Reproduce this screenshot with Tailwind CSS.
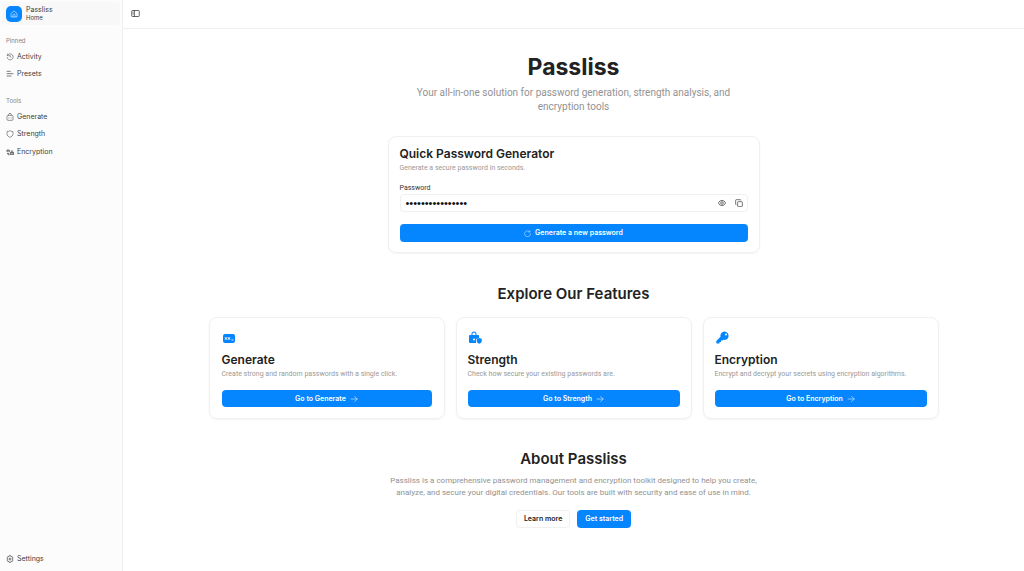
<!DOCTYPE html>
<html lang="en">
<head>
<meta charset="utf-8">
<meta name="viewport" content="width=device-width, initial-scale=1">
<title>Passliss</title>
<script src="https://cdn.jsdelivr.net/npm/@tailwindcss/browser@4"></script>
</head>
<body class="flex min-h-screen bg-white font-[Inter,sans-serif] text-[7px] leading-[10px] text-[#222]">

<aside class="flex w-[123px] shrink-0 flex-col border-r border-[#f0f0f0] bg-[#fcfcfc] text-[#3c3c3c]">
  <a href="#" class="m-[2px] flex h-[23px] items-center gap-1 rounded bg-[#f8f8f8] px-1">
    <span class="flex size-4 items-center justify-center rounded-[5px] bg-[#0586ff] text-white">
      <svg class="size-2" viewBox="0 0 24 24" fill="none" stroke="currentColor" stroke-width="1.6" stroke-linejoin="round"><path d="M3 10.5 12 3l9 7.500V21H3z"/><path d="M9 21v-6a3 3 0 0 1 6 0v6"/></svg>
    </span>
    <span class="flex flex-col leading-[8px]"><span>Passliss</span><span class="text-[6px]">Home</span></span>
  </a>
  <nav class="flex grow flex-col px-[6px] pb-1">
    <h2 class="mt-[9px] text-[6px] text-[#858585]">Pinned</h2>
    <a href="#" class="mt-[2px] flex h-[17px] items-center gap-[3px]">
      <svg class="size-2" viewBox="0 0 24 24" fill="none" stroke="currentColor" stroke-width="1.600"><path d="M4 2v6h6M4.500 7.500a9 9 0 1 1-1 5M12 6v5l4 2"/></svg>Activity</a>
    <a href="#" class="flex h-[18px] items-center gap-[3px]">
      <svg class="size-2" viewBox="0 0 24 24" fill="none" stroke="currentColor" stroke-width="2"><path d="M2 4h12M2 11h20M2 18h14"/></svg>Presets</a>
    <h2 class="mt-[13px] text-[6px] text-[#858585]">Tools</h2>
    <a href="#" class="mt-[2px] flex h-[17px] items-center gap-[3px]">
      <svg class="size-2" viewBox="0 0 24 24" fill="none" stroke="currentColor" stroke-width="1.600"><rect x="3" y="7" width="18" height="15" rx="3"/><path d="M8 7V5a4 4 0 0 1 8 0v2M7 15h2M11 15h2M15 15h2"/></svg>Generate</a>
    <a href="#" class="flex h-[18px] items-center gap-[3px]">
      <svg class="size-2" viewBox="0 0 24 24" fill="none" stroke="currentColor" stroke-width="1.600" stroke-linejoin="round"><path d="M12 2c3 2 6 3 9 3v6c0 6-4 9-9 11-5-2-9-5-9-11V5c3 0 6-1 9-3z"/></svg>Strength</a>
    <a href="#" class="flex h-[17px] items-center gap-[3px]">
      <svg class="size-2" viewBox="0 0 24 24" fill="none" stroke="currentColor" stroke-width="2"><path d="M3 12V6h7v6M3 9h7M3 16h7M6 16v4h5"/><rect x="14" y="13" width="8" height="7"/><path d="M16 13v-3a2 2 0 0 1 4 0v3M16 16h4"/></svg>Encryption</a>
    <a href="#" class="mt-auto flex h-[17px] items-center gap-[3px]">
      <svg class="size-2" viewBox="0 0 24 24" fill="none" stroke="currentColor" stroke-width="2" stroke-linejoin="round"><path d="m9.500 2h5l1 3 3-.5 2.500 4.500-2 3 2 3-2.500 4.500-3-.5-1 3h-5l-1-3-3 .5L3 15l2-3-2-3 2.500-4.500 3 .5z"/><circle cx="12" cy="12" r="3"/></svg>Settings</a>
  </nav>
</aside>

<div class="flex min-w-0 grow flex-col">
  <header class="flex h-[29px] items-center border-b border-[#f0f0f0] px-2 pb-[2px]">
    <button type="button" aria-label="Toggle sidebar" class="text-[#333]">
      <svg class="size-[9px]" viewBox="0 0 24 24" fill="none" stroke="currentColor" stroke-width="2"><rect x="2" y="4" width="20" height="16" rx="2"/><path d="M9 4v16M4.500 8h2M4.500 11h2M4.500 14h2"/></svg>
    </button>
  </header>

  <main class="flex flex-col items-center px-[25px] pt-6">
    <h1 class="text-[23px] leading-[28px] font-bold">Passliss</h1>
    <p class="mt-[5px] max-w-[340px] text-center font-[Roboto,sans-serif] text-[10px] leading-[14px] text-[#929292]">Your all-in-one solution for password generation, strength analysis, and encryption tools</p>

    <section class="mt-[22px] w-full max-w-[372px] rounded-lg border border-[#f0f0f0] px-[11px] py-[10px] shadow-xs">
      <h2 class="text-[12px] leading-[14px] font-semibold">Quick Password Generator</h2>
      <p class="mt-[2px] font-[Roboto,sans-serif] text-[#999]">Generate a secure password in seconds.</p>
      <label for="password" class="mt-[10px] block font-[Roboto,sans-serif] text-[#333]">Password</label>
      <div class="mt-[1px] flex h-[18px] items-center gap-[9px] rounded border border-[#f0f0f0] pr-1 pl-[5px] text-[#333]">
        <input id="password" type="password" value="aB3dE5gH7jK9mN2p" class="min-w-0 grow font-['Liberation_Sans',sans-serif] text-[11px] leading-[14px] text-[#111] outline-none">
        <button type="button" aria-label="Show password"><svg class="size-2" viewBox="0 0 24 24" fill="none" stroke="currentColor" stroke-width="2"><path d="M1 12q4-8 11-8t11 8q-4 8-11 8T1 12z"/><circle cx="12" cy="12" r="4"/></svg></button>
        <button type="button" aria-label="Copy password"><svg class="size-2" viewBox="0 0 24 24" fill="none" stroke="currentColor" stroke-width="2"><rect x="8" y="8" width="14" height="15" rx="2"/><path d="M4 17H3a1 1 0 0 1-1-1V4a2 2 0 0 1 2-2h12a1 1 0 0 1 1 1v1"/></svg></button>
      </div>
      <button type="button" class="mt-[12px] flex h-[18px] w-full items-center justify-center gap-1 rounded bg-[#0586ff] font-semibold text-white">
        <svg class="size-[7px]" viewBox="0 0 24 24" fill="none" stroke="currentColor" stroke-width="1.600"><path d="M20 7a10 10 0 1 0 2 5M20 2v5h-5"/></svg>Generate a new password</button>
    </section>

    <h2 class="mt-[31px] text-[15px] leading-[20px] font-semibold">Explore Our Features</h2>
    <div class="mt-[13px] grid w-full max-w-[730px] grid-cols-3 gap-[11px]">
      <section class="rounded-lg border border-[#f0f0f0] px-3 pt-[10px] pb-[11px] shadow-xs">
        <svg class="mt-[2px] size-4 text-[#0586ff]" viewBox="0 0 16 16"><rect x="1" y="4" width="12" height="9" rx="2" fill="currentColor"/><path d="m3 7.500 2 2m0-2-2 2m1-2.500v3m2-2.500 2 2m0-2-2 2m1-2.500v3m2.500 0h2" stroke="#fff" stroke-width=".8" fill="none"/></svg>
        <h3 class="mt-[7px] text-[12px] leading-[14px] font-semibold">Generate</h3>
        <p class="mt-[2px] font-[Roboto,sans-serif] text-[#999]">Create strong and random passwords with a single click.</p>
        <a href="#" class="mt-[11px] flex h-[17px] items-center justify-center gap-1 rounded bg-[#0586ff] font-semibold text-white">Go to Generate<svg class="size-2" viewBox="0 0 24 24" fill="none" stroke="currentColor" stroke-width="1.600"><path d="M2 12h20M13 4l9 8-9 8"/></svg></a>
      </section>
      <section class="rounded-lg border border-[#f0f0f0] px-[11px] pt-[10px] pb-[11px] shadow-xs">
        <svg class="mt-[2px] size-4 text-[#0586ff]" viewBox="0 0 16 16" fill="currentColor"><path d="M3.500 5V4a2.500 2.500 0 0 1 5 0v1H10a1 1 0 0 1 1 1v2L8 9v4H2a1 1 0 0 1-1-1V6a1 1 0 0 1 1-1zm1 0h3V4a1.500 1.500 0 0 0-3 0zM6 8.500a1 1 0 1 0 0 2 1 1 0 0 0 0-2z" fill-rule="evenodd"/><path d="M11.250 8c1 .6 1.700.8 2.500.8v2c0 1.500-1 2.500-2.500 3-1.500-.5-2.500-1.500-2.500-3v-2c.8 0 1.500-.2 2.500-.8z"/></svg>
        <h3 class="mt-[7px] text-[12px] leading-[14px] font-semibold">Strength</h3>
        <p class="mt-[2px] font-[Roboto,sans-serif] text-[#999]">Check how secure your existing passwords are.</p>
        <a href="#" class="mt-[11px] flex h-[17px] items-center justify-center gap-1 rounded bg-[#0586ff] font-semibold text-white">Go to Strength<svg class="size-2" viewBox="0 0 24 24" fill="none" stroke="currentColor" stroke-width="1.600"><path d="M2 12h20M13 4l9 8-9 8"/></svg></a>
      </section>
      <section class="rounded-lg border border-[#f0f0f0] px-[11px] pt-[10px] pb-[11px] shadow-xs">
        <svg class="mt-[2px] size-4 text-[#0586ff]" viewBox="0 0 16 16" fill="currentColor"><path fill-rule="evenodd" d="M9.500 1.500a4.200 4.200 0 1 1-1 8.300l-1 .7H6V12H4.500v1.500H2a.7.7 0 0 1-.7-.7V11l4.200-4.200a4.200 4.200 0 0 1 4-5.300zm1.500 2a1 1 0 1 0 0 2 1 1 0 0 0 0-2z"/></svg>
        <h3 class="mt-[7px] text-[12px] leading-[14px] font-semibold">Encryption</h3>
        <p class="mt-[2px] font-[Roboto,sans-serif] text-[#999]">Encrypt and decrypt your secrets using encryption algorithms.</p>
        <a href="#" class="mt-[11px] flex h-[17px] items-center justify-center gap-1 rounded bg-[#0586ff] font-semibold text-white">Go to Encryption<svg class="size-2" viewBox="0 0 24 24" fill="none" stroke="currentColor" stroke-width="1.600"><path d="M2 12h20M13 4l9 8-9 8"/></svg></a>
      </section>
    </div>

    <h2 class="mt-[30px] text-[15px] leading-[20px] font-semibold">About Passliss</h2>
    <p class="mt-[6px] max-w-[373px] text-center font-[Roboto,sans-serif] text-[8px] leading-[12px] text-[#929292]">Passliss is a comprehensive password management and encryption toolkit designed to help you create, analyze, and secure your digital credentials. Our tools are built with security and ease of use in mind.</p>
    <div class="mt-[11px] flex gap-[7px]">
      <a href="#" class="flex h-[18px] items-center rounded border border-[#f0f0f0] px-[7px] font-semibold">Learn more</a>
      <a href="#" class="flex h-[18px] items-center rounded bg-[#0586ff] px-2 font-semibold text-white">Get started</a>
    </div>
  </main>
</div>
</body>
</html>
